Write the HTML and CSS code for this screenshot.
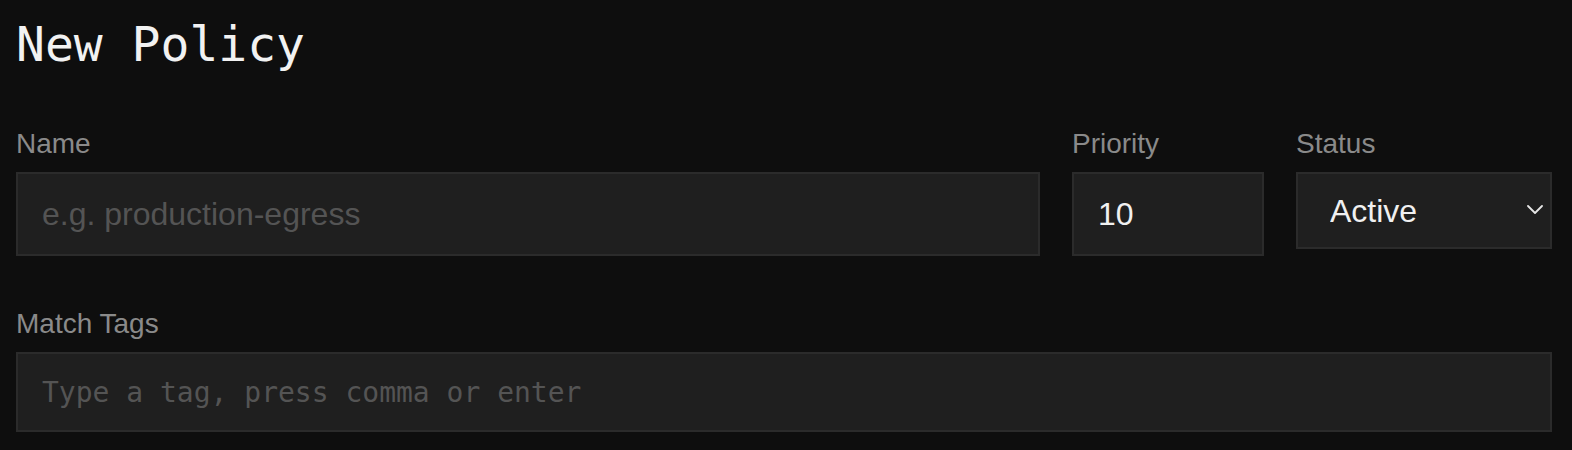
FILE: index.html
```html
<!DOCTYPE html>
<html lang="en">
<head>
<meta charset="utf-8">
<title>New Policy</title>
<link rel="stylesheet" href="styles.css">
</head>
<body>
<main class="page">
  <h1 class="title">New Policy</h1>
  <div class="row row-top">
    <div class="field">
      <label class="label" for="name">Name</label>
      <input id="name" class="input" type="text" placeholder="e.g. production-egress">
    </div>
    <div class="field">
      <label class="label" for="priority">Priority</label>
      <input id="priority" class="input" type="text" value="10">
    </div>
    <div class="field">
      <label class="label" for="status">Status</label>
      <div class="select-wrap">
        <select id="status" class="select">
          <option>Active</option>
          <option>Inactive</option>
        </select>
        <svg class="chevron" width="16" height="9" viewBox="0 0 16 9" aria-hidden="true">
          <path d="M1 1 L8 8 L15 1" fill="none" stroke="#e6e6e6" stroke-width="1.8" stroke-linecap="round" stroke-linejoin="round"/>
        </svg>
      </div>
    </div>
  </div>
  <div class="row row-tags">
    <div class="field">
      <label class="label" for="tags">Match Tags</label>
      <input id="tags" class="input input-tags" type="text" placeholder="Type a tag, press comma or enter">
    </div>
  </div>
</main>
</body>
</html>
```

FILE: styles.css
```css
* {
  box-sizing: border-box;
}

html, body {
  margin: 0;
  padding: 0;
  background: #0e0e0e;
}

body {
  font-family: "Liberation Sans", Arial, sans-serif;
  color: #f0f0f0;
}

.page {
  width: 1552px;
  padding: 16px 0 0 16px;
}

.title {
  margin: 0;
  font-family: "DejaVu Sans Mono", monospace;
  font-weight: 400;
  font-size: 48px;
  line-height: 56px;
  color: #f2f2f2;
}

.row {
  display: grid;
  column-gap: 32px;
}

.row-top {
  margin-top: 56px;
  grid-template-columns: 1fr 192px 256px;
  align-items: start;
}

.row-tags {
  margin-top: 52px;
  grid-template-columns: 1fr;
}

.field {
  display: flex;
  flex-direction: column;
}

.label {
  font-size: 28px;
  line-height: 32px;
  color: #8a8a8a;
  margin-bottom: 12px;
}

.input {
  height: 84px;
  width: 100%;
  margin: 0;
  padding: 0 24px;
  border: 2px solid #2b2b2b;
  border-radius: 0;
  background: #1f1f1f;
  color: #f0f0f0;
  font-family: "Liberation Sans", Arial, sans-serif;
  font-size: 32px;
  outline: none;
}

.input::placeholder {
  color: #545454;
  opacity: 1;
}

.input-tags {
  height: 80px;
  font-family: "DejaVu Sans Mono", monospace;
  font-size: 28px;
}

.select-wrap {
  position: relative;
}

.select {
  appearance: none;
  -webkit-appearance: none;
  display: block;
  width: 100%;
  height: 77px;
  margin: 0;
  padding: 0 32px;
  border: 2px solid #2b2b2b;
  border-radius: 0;
  background: #1f1f1f;
  color: #f0f0f0;
  font-family: "Liberation Sans", Arial, sans-serif;
  font-size: 32px;
  outline: none;
}

.chevron {
  position: absolute;
  right: 9px;
  top: 33px;
  pointer-events: none;
}
```
